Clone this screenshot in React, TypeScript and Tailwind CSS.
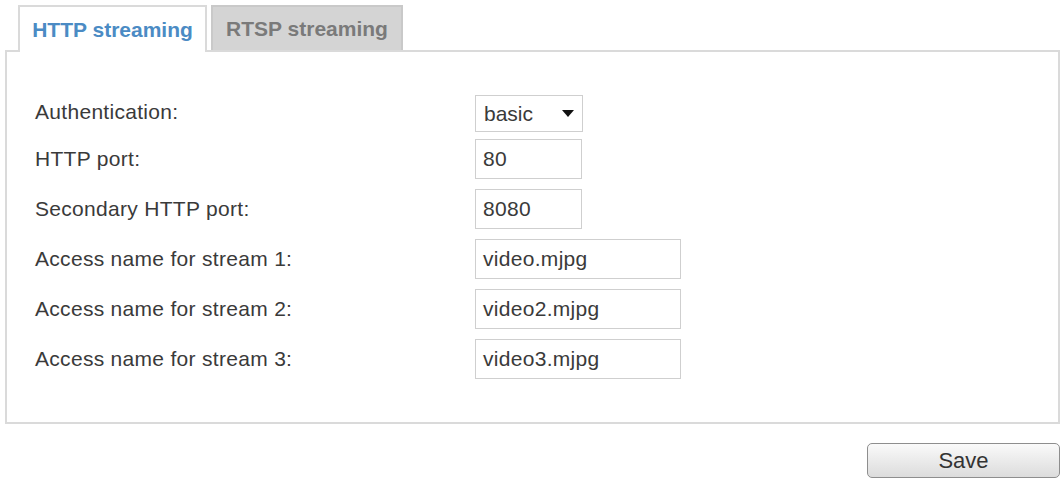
const rows: { label: string; value: string; width: string; select?: boolean }[] = [
  { label: 'Authentication:', value: 'basic', width: 'w-[108px]', select: true },
  { label: 'HTTP port:', value: '80', width: 'w-[107px]' },
  { label: 'Secondary HTTP port:', value: '8080', width: 'w-[107px]' },
  { label: 'Access name for stream 1:', value: 'video.mjpg', width: 'w-[206px]' },
  { label: 'Access name for stream 2:', value: 'video2.mjpg', width: 'w-[206px]' },
  { label: 'Access name for stream 3:', value: 'video3.mjpg', width: 'w-[206px]' },
]

export default function App() {
  return (
    <div className="w-[1064px] h-[479px] bg-white overflow-hidden font-['Liberation_Sans',Arial,sans-serif] text-[#3a3a3a]">
      {/* tabs */}
      <div className="flex gap-[4px] pl-[18px] pt-[5px]">
        <div className="relative z-10 -mb-[2px] h-[47px] w-[189px] border-2 border-b-0 border-[#dadada] bg-white flex items-center justify-center text-[21px] font-bold text-[#4b8bc4]">
          HTTP streaming
        </div>
        <div className="h-[45px] w-[192px] border-2 border-b-0 border-[#c9c9c9] bg-[#d4d4d4] flex items-center justify-center text-[21px] font-bold text-[#7a7a7a]">
          RTSP streaming
        </div>
      </div>

      {/* panel */}
      <div className="ml-[5px] w-[1055px] h-[374px] border-2 border-[#dadada] pl-[28px] pt-[43px]">
        <div className="flex flex-col gap-[10px]">
          {rows.map((r) => (
            <div key={r.label} className="flex items-center">
              <div className="w-[440px] text-[21px] tracking-[0.3px]">{r.label}</div>
              {r.select ? (
                <div className={`${r.width} h-[37px] -mb-[3px] border-[1.5px] border-[#cfcfcf] flex items-center justify-between pl-[8px] pr-[8px] text-[21px]`}>
                  <span>basic</span>
                  <svg width="12" height="7" viewBox="0 0 12 7">
                    <path d="M0 0 L12 0 L6 7 Z" fill="#111" />
                  </svg>
                </div>
              ) : (
                <div className={`${r.width} h-[40px] border-[1.5px] border-[#cfcfcf] flex items-center pl-[7px] text-[21px] tracking-[0.3px]`}>
                  {r.value}
                </div>
              )}
            </div>
          ))}
        </div>
      </div>

      {/* save */}
      <div className="w-[1060px] flex justify-end pt-[19px]">
        <button className="w-[193px] h-[35px] rounded-[5px] border-[1.5px] border-[#8e8e8e] bg-gradient-to-b from-[#fafafa] to-[#dcdcdc] text-[22px] text-[#333]">
          Save
        </button>
      </div>
    </div>
  )
}
